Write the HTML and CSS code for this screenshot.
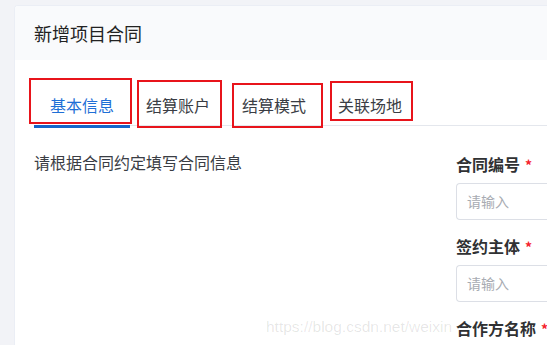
FILE: index.html
```html
<!DOCTYPE html>
<html lang="zh-CN">
<head>
<meta charset="utf-8">
<title>新增项目合同</title>
<link rel="stylesheet" href="styles.css">
</head>
<body>
<div class="card">
  <div class="card-header">新增项目合同</div>
  <div class="card-body">
    <div class="tabs">
      <div class="tab active">基本信息</div>
      <div class="tab">结算账户</div>
      <div class="tab">结算模式</div>
      <div class="tab">关联场地</div>
    </div>
    <div class="content">
      <div class="desc">请根据合同约定填写合同信息</div>
      <div class="form">
        <div class="form-item">
          <div class="label">合同编号<span class="req">*</span></div>
          <div class="input">请输入</div>
        </div>
        <div class="form-item">
          <div class="label">签约主体<span class="req">*</span></div>
          <div class="input">请输入</div>
        </div>
        <div class="form-item">
          <div class="label">合作方名称<span class="req">*</span></div>
        </div>
      </div>
    </div>
  </div>
</div>
<div class="mark mark1"></div>
<div class="mark mark2"></div>
<div class="mark mark3"></div>
<div class="mark mark4"></div>
<div class="watermark">https://blog.csdn.net/weixin</div>
</body>
</html>
```

FILE: styles.css
```css
html, body {
  margin: 0;
  padding: 0;
}
body {
  width: 547px;
  height: 345px;
  overflow: hidden;
  background: #f2f3f7;
  font-family: "Noto Sans CJK SC", "Noto Sans", sans-serif;
  color: #303133;
  box-sizing: border-box;
  padding: 5px 0 0 14px;
}
.card {
  width: 533px;
  height: 340px;
  background: #ffffff;
  border: 1px solid #ebeef5;
  border-right: none;
  border-bottom: none;
  border-radius: 4px 0 0 0;
  box-sizing: border-box;
  overflow: hidden;
}
.card-header {
  height: 54px;
  line-height: 54px;
  background: #f9fafc;
  padding: 0 19px;
  font-size: 18px;
  color: #222;
}
.card-body {
  padding: 25px 19px 0;
}
.tabs {
  display: flex;
  height: 40px;
  border-bottom: 1px solid #e4e7ed;
  margin-right: -19px;
}
.tab {
  position: relative;
  padding: 0 16px;
  line-height: 40px;
  font-size: 16px;
  color: #3a3d44;
}
.tab.active {
  color: #1f6fd6;
}
.tab.active::after {
  content: "";
  position: absolute;
  left: 0;
  right: 0;
  bottom: -3px;
  height: 3px;
  background: #1565c9;
}
.content {
  display: flex;
  margin-top: 25px;
}
.desc {
  width: 422px;
  font-size: 16px;
  line-height: 22px;
  color: #3a3d44;
  flex-shrink: 0;
}
.form {
  padding-top: 2px;
  flex: 1;
  margin-right: -19px;
}
.form-item {
  margin-bottom: 15px;
}
.label {
  font-size: 16px;
  font-weight: bold;
  line-height: 22px;
  color: #303133;
  white-space: nowrap;
}
.req {
  color: #f5222d;
  margin-left: 5px;
  font-size: 14px;
}
.input {
  margin-top: 7px;
  height: 37px;
  box-sizing: border-box;
  border: 1px solid #dcdfe6;
  border-right: none;
  border-radius: 4px 0 0 4px;
  padding: 0 10px;
  line-height: 35px;
  font-size: 14px;
  color: #a8abb2;
}
.mark {
  position: absolute;
  border: 2px solid #e8141b;
  box-sizing: border-box;
}
.mark1 { left: 29px; top: 78px; width: 103px; height: 46px; }
.mark2 { left: 137px; top: 80px; width: 85px; height: 48px; }
.mark3 { left: 232px; top: 83px; width: 91px; height: 45px; }
.mark4 { left: 330px; top: 81px; width: 83px; height: 40px; }
.watermark {
  position: absolute;
  left: 266px;
  top: 317px;
  font-family: "Liberation Sans", Arial, sans-serif;
  font-size: 15.5px;
  line-height: 20px;
  color: rgba(0, 0, 0, 0.1);
  white-space: nowrap;
}
```
